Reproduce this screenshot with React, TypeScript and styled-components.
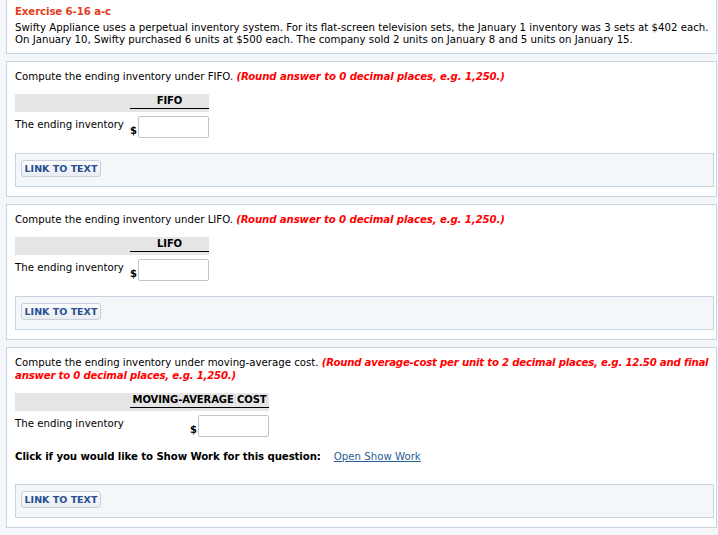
import React from "react";
import styled, { createGlobalStyle } from "styled-components";

const Global = createGlobalStyle`
  html, body { margin: 0; padding: 0; background: #f4f7fa; }
  body { font-family: Verdana, "DejaVu Sans", sans-serif; font-size: 10.2px; color: #000; }
`;

const Page = styled.div`
  display: flex;
  flex-direction: column;
  gap: 7px;
  padding: 0 0 7px 6px;
  margin-top: -1px;
`;

const Panel = styled.section<{ $top?: number }>`
  background: #fff;
  border: 1px solid #c7d3e1;
  padding: ${(p) => p.$top ?? 8}px 2px 9px 8px;
  margin-right: 1px;
  display: flex;
  flex-direction: column;
  align-items: flex-start;
`;

const Title = styled.div`
  color: #e23d1b;
  font-weight: bold;
  line-height: 13px;
  margin: 0 0 4px;
  letter-spacing: -0.1px;
`;

const Para = styled.p`
  margin: 0 0 -2px;
  line-height: 12px;
`;

const TextLine = styled.span`
  display: block;
  white-space: nowrap;
`;

const Question = styled.p`
  margin: 0;
  line-height: 13px;
`;

const Hint = styled.span<{ $tight?: boolean }>`
  color: #ff0000;
  font-weight: bold;
  font-style: italic;
  letter-spacing: ${(p) => (p.$tight ? -0.22 : -0.12)}px;
`;

const AnswerTable = styled.table`
  border-collapse: collapse;
  margin-top: 11px;
`;

const HeadRow = styled.tr`
  background: #e5e5e5;
`;

const HeadCell = styled.th`
  padding: 0 0 3px 0;
  height: 18px;
  box-sizing: border-box;
  vertical-align: bottom;
`;

const HeadLabel = styled.div`
  border-bottom: 1px solid #000;
  font-size: 10px;
  font-weight: bold;
  line-height: 12px;
  text-align: center;
  padding: 0 1px 1px;
  white-space: nowrap;
  letter-spacing: -0.1px;
`;

const LabelCell = styled.td<{ $w: number }>`
  width: ${(p) => p.$w}px;
  padding: 6px 0 0 0;
  vertical-align: top;
  line-height: 13px;
  white-space: nowrap;
`;

const ValueCell = styled.td`
  padding: 4px 0 0 0;
  text-align: right;
  white-space: nowrap;
`;

const ValueWrap = styled.div`
  display: flex;
  justify-content: flex-end;
  align-items: flex-end;
  gap: 1px;
`;

const Dollar = styled.span`
  font-size: 10px;
  font-weight: bold;
  line-height: 10px;
  margin-bottom: 2px;
`;

const Input = styled.input`
  width: 71px;
  height: 22px;
  box-sizing: border-box;
  border: 1px solid #c4c4c4;
  border-radius: 2px;
  margin: 0;
  padding: 0 3px;
  font: inherit;
  background: #fff;
`;

const LinkBox = styled.div<{ $mt: number }>`
  align-self: stretch;
  margin-top: ${(p) => p.$mt}px;
  background: #f4f7fa;
  border: 1px solid #c7d3e1;
  padding: 6px 5px 9px;
`;

const LinkButton = styled.button`
  display: block;
  width: 80px;
  height: 17px;
  box-sizing: border-box;
  border: 1px solid #c9d0d9;
  border-radius: 3px;
  background: linear-gradient(#fbfcfd, #e9edf2);
  color: #27508f;
  font-family: Verdana, "DejaVu Sans", sans-serif;
  font-size: 9.5px;
  font-weight: bold;
  padding: 0;
  line-height: 15px;
`;

const WorkLine = styled.div`
  margin-top: 13px;
  display: flex;
  gap: 13px;
  line-height: 13px;
`;

const WorkLabel = styled.span`
  font-weight: bold;
  letter-spacing: -0.1px;
`;

const WorkLink = styled.a`
  color: #2a5d96;
  text-decoration: underline;
`;

function Answer({ head, headWidth }: { head: string; headWidth: number }) {
  return (
    <AnswerTable>
      <tbody>
        <HeadRow>
          <HeadCell />
          <HeadCell>
            <HeadLabel style={{ width: headWidth - 2 }}>{head}</HeadLabel>
          </HeadCell>
        </HeadRow>
        <tr>
          <LabelCell $w={115}>The ending inventory</LabelCell>
          <ValueCell>
            <ValueWrap>
              <Dollar>$</Dollar>
              <Input type="text" />
            </ValueWrap>
          </ValueCell>
        </tr>
      </tbody>
    </AnswerTable>
  );
}

export default function App() {
  return (
    <>
      <Global />
      <Page>
        <Panel $top={5}>
          <Title>Exercise 6-16 a-c</Title>
          <Para>
            <TextLine>
              Swifty Appliance uses a perpetual inventory system. For its flat-screen television sets, the January 1 inventory was 3 sets at $402 each.
            </TextLine>
            <TextLine>
              On January 10, Swifty purchased 6 units at $500 each. The company sold 2 units on January 8 and 5 units on January 15.
            </TextLine>
          </Para>
        </Panel>

        <Panel>
          <Question>
            Compute the ending inventory under FIFO. <Hint>(Round answer to 0 decimal places, e.g. 1,250.)</Hint>
          </Question>
          <Answer head="FIFO" headWidth={79} />
          <LinkBox $mt={15}>
            <LinkButton>LINK TO TEXT</LinkButton>
          </LinkBox>
        </Panel>

        <Panel>
          <Question>
            Compute the ending inventory under LIFO. <Hint>(Round answer to 0 decimal places, e.g. 1,250.)</Hint>
          </Question>
          <Answer head="LIFO" headWidth={79} />
          <LinkBox $mt={15}>
            <LinkButton>LINK TO TEXT</LinkButton>
          </LinkBox>
        </Panel>

        <Panel>
          <Question>
            <TextLine>
              Compute the ending inventory under moving-average cost.{" "}
              <Hint $tight>(Round average-cost per unit to 2 decimal places, e.g. 12.50 and final</Hint>
            </TextLine>
            <TextLine>
              <Hint $tight>answer to 0 decimal places, e.g. 1,250.)</Hint>
            </TextLine>
          </Question>
          <Answer head="MOVING-AVERAGE COST" headWidth={139} />
          <WorkLine>
            <WorkLabel>Click if you would like to Show Work for this question:</WorkLabel>
            <WorkLink href="#">Open Show Work</WorkLink>
          </WorkLine>
          <LinkBox $mt={21}>
            <LinkButton>LINK TO TEXT</LinkButton>
          </LinkBox>
        </Panel>
      </Page>
    </>
  );
}
